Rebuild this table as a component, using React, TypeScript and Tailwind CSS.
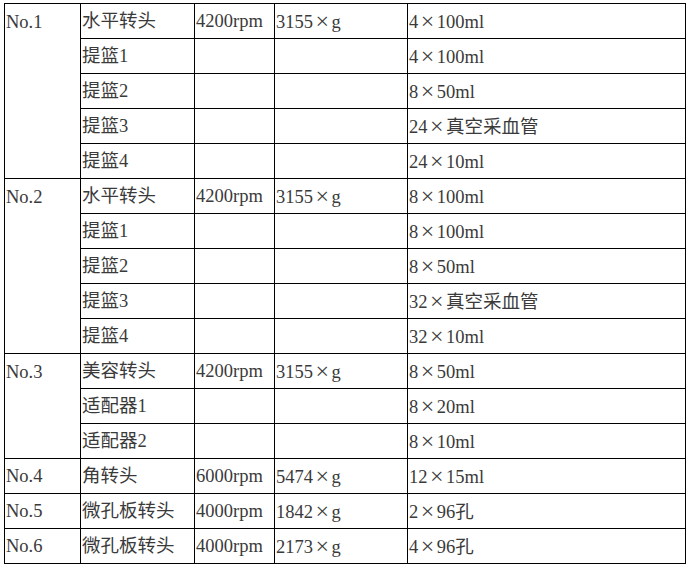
import React from "react";

type Row = {
  no?: string;
  span?: number;
  name: string;
  speed?: string;
  force?: string;
  cap: string;
};

const rows: Row[] = [
  { no: "No.1", span: 5, name: "水平转头", speed: "4200rpm", force: "3155×g", cap: "4×100ml" },
  { name: "提篮1", cap: "4×100ml" },
  { name: "提篮2", cap: "8×50ml" },
  { name: "提篮3", cap: "24×真空采血管" },
  { name: "提篮4", cap: "24×10ml" },
  { no: "No.2", span: 5, name: "水平转头", speed: "4200rpm", force: "3155×g", cap: "8×100ml" },
  { name: "提篮1", cap: "8×100ml" },
  { name: "提篮2", cap: "8×50ml" },
  { name: "提篮3", cap: "32×真空采血管" },
  { name: "提篮4", cap: "32×10ml" },
  { no: "No.3", span: 3, name: "美容转头", speed: "4200rpm", force: "3155×g", cap: "8×50ml" },
  { name: "适配器1", cap: "8×20ml" },
  { name: "适配器2", cap: "8×10ml" },
  { no: "No.4", span: 1, name: "角转头", speed: "6000rpm", force: "5474×g", cap: "12×15ml" },
  { no: "No.5", span: 1, name: "微孔板转头", speed: "4000rpm", force: "1842×g", cap: "2×96孔" },
  { no: "No.6", span: 1, name: "微孔板转头", speed: "4000rpm", force: "2173×g", cap: "4×96孔" },
];

// SimSun draws × full width and large; widen it so the numbers line up like the reference
function Txt({ text }: { text?: string }) {
  if (!text) return null;
  const parts = text.split("×");
  if (parts.length === 1) return <>{text}</>;
  return (
    <>
      {parts[0]}
      <span className="inline-block w-[18.5px] text-center text-[24px] leading-none font-light align-[-1px]">×</span>
      {parts[1]}
    </>
  );
}

const cell = "border border-black pl-[1px] align-middle h-[35px] leading-none";

export default function App() {
  return (
    <div className="bg-white w-[691px] h-[569px] pt-[3px] pl-[4px]">
      <table
        className="border-collapse text-[18.5px] text-[#3a3a3a]"
        style={{ fontFamily: "'Liberation Serif', 'Noto Sans CJK SC', serif" }}
      >
        <colgroup>
          <col className="w-[76px]" />
          <col className="w-[114px]" />
          <col className="w-[80px]" />
          <col className="w-[133px]" />
          <col className="w-[278px]" />
        </colgroup>
        <tbody>
          {rows.map((r, i) => (
            <tr key={i}>
              {r.no && (
                <td rowSpan={r.span} className={`${cell} ${r.span! > 1 ? "align-top pt-[9px]" : ""}`}>
                  {r.no}
                </td>
              )}
              <td className={cell}>{r.name}</td>
              <td className={cell}>{r.speed}</td>
              <td className={cell}>
                <Txt text={r.force} />
              </td>
              <td className={cell}>
                <Txt text={r.cap} />
              </td>
            </tr>
          ))}
        </tbody>
      </table>
    </div>
  );
}
